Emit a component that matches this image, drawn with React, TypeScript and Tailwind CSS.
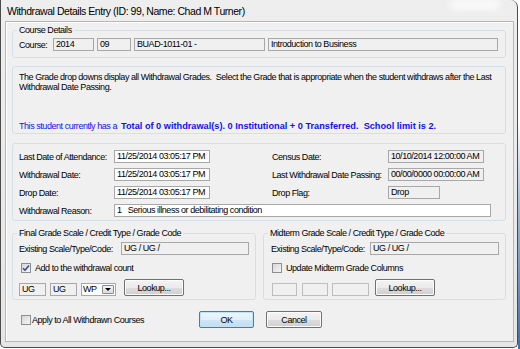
import clsx from 'clsx';
import type { ReactNode } from 'react';

const FONT = "font-['Liberation_Sans',Arial,sans-serif]";

export default function App() {
    return (
        <div className={clsx('flex h-[349px] w-[520px] whitespace-nowrap bg-white text-[9px] leading-[12px] tracking-[-0.45px] text-black', FONT)}>
            <div className="flex h-[348px] w-[518px] flex-col rounded-tr-[7px] rounded-b-[5px] border-x border-b border-[#4b4b4b] bg-[linear-gradient(#eeeeee,#e6e6e6)] pl-[4px] pr-[3px] pb-[5px]">
                {/* title bar */}
                <div className="flex h-[21px] items-center">
                    <span className="ml-[2px] text-[10.5px] tracking-[-0.45px]">Withdrawal Details Entry (ID: 99, Name: Chad M Turner)</span>
                    <div className="ml-auto mr-[14px] h-[10px] w-[50px] self-start rounded-b-md bg-white/70 blur-[3px]" />
                </div>

                {/* client area */}
                <div className="flex flex-1 flex-col border border-[#b7b7b7] bg-[#f0f0f0] pl-[6px] pr-[7px] pt-[2px] shadow-[inset_1px_1px_0_#fff]">
                    <GroupBox title="Course Details" className="w-[494px] pb-[6px]">
                        <div className="flex items-center gap-[3px] pl-[6px] pt-[2px]">
                            <span className="w-[31px]">Course:</span>
                            <TextBox className="w-[41px]">2014</TextBox>
                            <TextBox className="w-[34px]">09</TextBox>
                            <TextBox className="w-[131px]">BUAD-1011-01 -</TextBox>
                            <TextBox className="w-[230px]">Introduction to Business</TextBox>
                        </div>
                    </GroupBox>

                    <div className="mt-[8px] flex h-[68px] w-[494px] flex-col justify-between rounded-[3px] border border-[#d5dfe5] pb-[2px] pl-[6px] pt-[5px] leading-[10px]">
                        <p className="whitespace-pre">
                            {'The Grade drop downs display all Withdrawal Grades.  Select the Grade that is appropriate when the student withdraws after the Last\nWithdrawal Date Passing.'}
                        </p>
                        <p className="whitespace-pre text-[#1010f0]">
                            {'This student currently has a  '}
                            <b className="text-[9.2px] tracking-normal">{'Total of 0 withdrawal(s). 0 Institutional + 0 Transferred.  School limit is 2.'}</b>
                        </p>
                    </div>

                    <div className="mt-[9px] flex w-[494px] flex-col gap-[5px] rounded-[3px] border border-[#d5dfe5] pb-[3px] pl-[6px] pt-[6px]">
                        <DateRow label="Last Date of Attendance:" value="11/25/2014 03:05:17 PM" rightLabel="Census Date:" rightValue="10/10/2014 12:00:00 AM" />
                        <DateRow label="Withdrawal Date:" value="11/25/2014 03:05:17 PM" rightLabel="Last Withdrawal Date Passing:" rightValue="00/00/0000 00:00:00 AM" />
                        <div className="flex items-center">
                            <span className="w-[95px]">Drop Date:</span>
                            <TextBox className="w-[96px] bg-white">11/25/2014 03:05:17 PM</TextBox>
                            <span className="ml-[62px] w-[116px]">Drop Flag:</span>
                            <TextBox className="w-[52px]">Drop</TextBox>
                        </div>
                        <div className="flex items-center">
                            <span className="w-[95px]">Withdrawal Reason:</span>
                            <TextBox className="w-[377px] bg-white">{'1   Serious illness or debilitating condition'}</TextBox>
                        </div>
                    </div>

                    <div className="mt-[6px] flex gap-[7px]">
                        <GroupBox title="Final Grade Scale / Credit Type / Grade Code" className="w-[244px] pb-[3px]">
                            <div className="pl-[6px] pt-[3px]">
                                <div className="flex items-center">
                                    <span className="w-[102px]">Existing Scale/Type/Code:</span>
                                    <TextBox className="w-[128px]">UG / UG /</TextBox>
                                </div>
                                <div className="ml-[2px] mt-[7px] flex items-center gap-[4px]">
                                    <CheckBox checked />
                                    <span>Add to the withdrawal count</span>
                                </div>
                                <div className="mt-[5px] flex items-end">
                                    <TextBox className="w-[27px]">UG</TextBox>
                                    <TextBox className="ml-[4px] w-[27px]">UG</TextBox>
                                    <div className="ml-[4px] flex h-[13px] w-[35px] border border-[#a8a8a8] bg-white">
                                        <span className="flex-1 pl-[1px] leading-[11px]">WP</span>
                                        <span className="my-[1px] mr-[1px] flex w-[12px] items-center justify-center rounded-[1px] border border-[#8a8a8a] bg-[linear-gradient(#f6f6f6,#dcdcdc)]">
                                            <span className="h-0 w-0 border-x-[3px] border-t-[3px] border-x-transparent border-t-black" />
                                        </span>
                                    </div>
                                    <Btn className="ml-[8px] w-[60px]">Lookup...</Btn>
                                </div>
                            </div>
                        </GroupBox>

                        <GroupBox title="Midterm Grade Scale / Credit Type / Grade Code" className="w-[243px] pb-[3px]">
                            <div className="pl-[7px] pt-[3px]">
                                <div className="flex items-center">
                                    <span className="w-[99px]">Existing Scale/Type/Code:</span>
                                    <TextBox className="w-[129px]">UG / UG /</TextBox>
                                </div>
                                <div className="ml-[1px] mt-[7px] flex items-center gap-[4px]">
                                    <CheckBox />
                                    <span>Update Midterm Grade Columns</span>
                                </div>
                                <div className="ml-[1px] mt-[5px] flex items-end">
                                    <TextBox className="w-[25px] border-[#bdbdbd]" />
                                    <TextBox className="ml-[5px] w-[26px] border-[#bdbdbd]" />
                                    <TextBox className="ml-[4px] w-[37px] border-[#bdbdbd]" />
                                    <Btn className="ml-[6px] w-[60px]">Lookup...</Btn>
                                </div>
                            </div>
                        </GroupBox>
                    </div>

                    <div className="mt-[11px] flex items-center">
                        <div className="ml-[9px] flex w-[178px] items-center gap-[1px]">
                            <CheckBox />
                            <span>Apply to All Withdrawn Courses</span>
                        </div>
                        <Btn primary className="h-[16px] w-[55px]">OK</Btn>
                        <Btn className="ml-[12px] h-[16px] w-[56px]">Cancel</Btn>
                    </div>
                </div>
            </div>
            <div className="h-full w-[2px] bg-[linear-gradient(#ffffff_0%,#ffffff_35%,#9fb9d8_60%,#3f6fa6_100%)]" />
        </div>
    );
}

function GroupBox({ title, className, children }: { title: string; className?: string; children: ReactNode }) {
    return (
        <fieldset className={clsx('rounded-[3px] border border-[#d5dfe5]', className)}>
            <legend className="ml-[4px] px-[2px] leading-[12px]">{title}</legend>
            {children}
        </fieldset>
    );
}

function DateRow({ label, value, rightLabel, rightValue }: { label: string; value: string; rightLabel: string; rightValue: string }) {
    return (
        <div className="flex items-center">
            <span className="w-[95px]">{label}</span>
            <TextBox className="w-[96px] bg-white">{value}</TextBox>
            <span className="ml-[62px] w-[116px]">{rightLabel}</span>
            <TextBox className="w-[96px]">{rightValue}</TextBox>
        </div>
    );
}

function TextBox({ className, children }: { className?: string; children?: ReactNode }) {
    return (
        <div className={clsx('h-[13px] overflow-hidden whitespace-pre border border-[#a8a8a8] bg-[#f0f0f0] pl-[2px] leading-[11px]', className)}>
            {children}
        </div>
    );
}

function Btn({ primary, className, children }: { primary?: boolean; className?: string; children: ReactNode }) {
    return (
        <button
            type="button"
            className={clsx(
                'flex h-[17px] items-center justify-center rounded-[2px] border leading-[12px]',
                primary
                    ? 'border-[#3c7fb1] bg-[linear-gradient(#eef7fd,#e0eff9_50%,#cfe6f5_51%,#c2def2)] shadow-[inset_0_0_0_1px_#bfe3f7]'
                    : 'border-[#707070] bg-[linear-gradient(#f3f3f3,#ebebeb_50%,#dddddd_51%,#cfcfcf)] shadow-[inset_0_0_0_1px_#fcfcfc]',
                className,
            )}
        >
            {children}
        </button>
    );
}

function CheckBox({ checked }: { checked?: boolean }) {
    return (
        <span className="relative flex h-[10px] w-[10px] shrink-0 items-center justify-center border border-[#8e8f8f] bg-[linear-gradient(135deg,#d6d6d6,#f6f6f6)]">
            {checked && (
                <svg viewBox="0 0 8 8" className="h-[8px] w-[8px]">
                    <path d="M1 4.2 L3 6.2 L7 1.5" fill="none" stroke="#2b3f8c" strokeWidth="1.4" />
                </svg>
            )}
        </span>
    );
}
